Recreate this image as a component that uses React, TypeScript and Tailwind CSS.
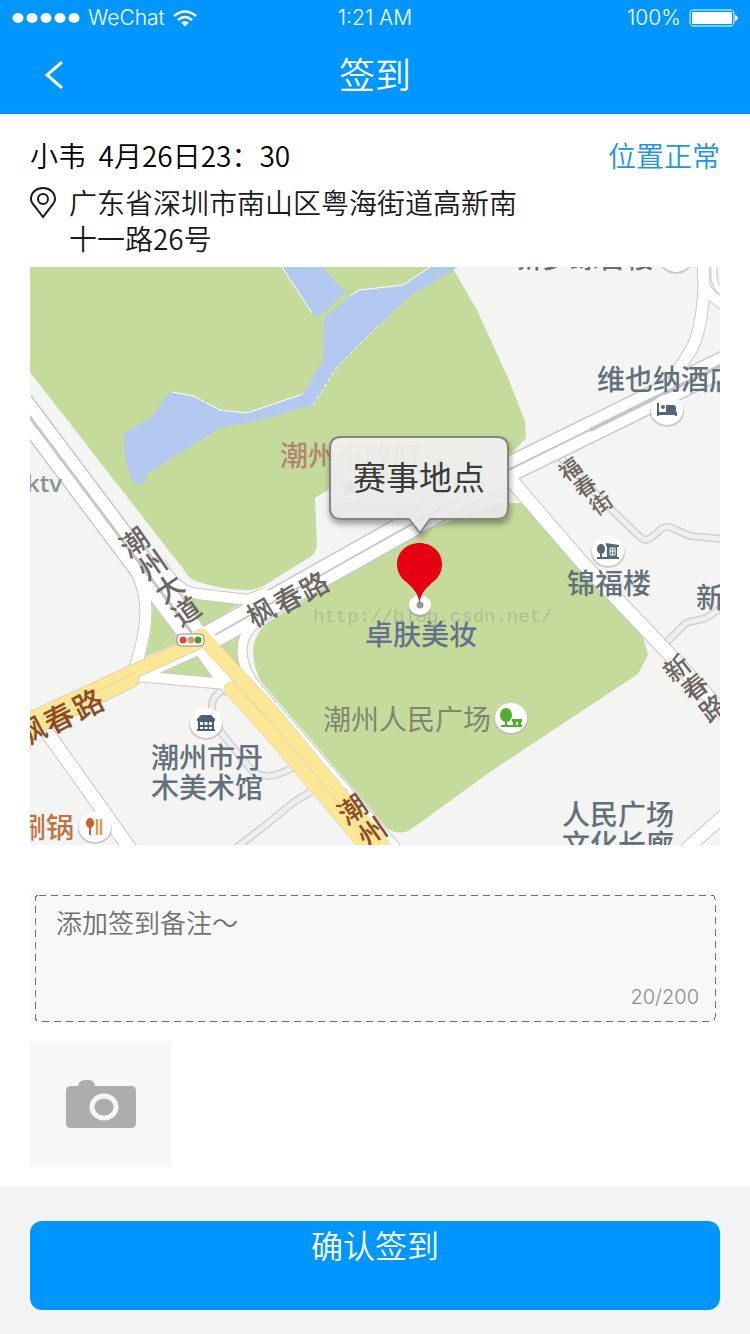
import React from "react";

type Glyph = { char: string; x: number; y: number };

function StreetLabel({ glyphs, angle, size, color }: { glyphs: Glyph[]; angle: number; size: number; color: string }) {
  return (
    <g fill={color} fontSize={size} textAnchor="middle" className="font-medium">
      {glyphs.map((g, i) => (
        <text key={i} x="0" y={size * 0.38} transform={`translate(${g.x} ${g.y}) rotate(${angle})`}>
          {g.char}
        </text>
      ))}
    </g>
  );
}

function PoiBadge({ x, y, children }: { x: number; y: number; children: React.ReactNode }) {
  return (
    <g transform={`translate(${x} ${y})`}>
      <ellipse cx="0" cy="2" rx="17" ry="15" fill="#b9b9b9" opacity="0.7" />
      <ellipse cx="0" cy="0" rx="16" ry="15" fill="#fff" />
      {children}
    </g>
  );
}

// each road is drawn twice: grey casing first, then its surface
const minorRoads = [
  "M558 455 L612 510 L641 538 Q646 542 652 537 L661 529 Q667 525 674 529 L690 536 L724 539",
  "M662 647 L684 625 Q688 621 694 621 L706 618 L724 606",
  "M226 689 Q211 695 212 708 Q213 722 223 735 L250 768 Q257 776 268 776 Q277 776 294 767",
  "M312 791 L294 802 L262 828 L236 848",
];

const roads = [
  { d: "M703 260 L704 287 Q702 330 691 350 L677 372", w: 11 },
  { d: "M714 260 L714 278 Q715 288 726 296", w: 5 },
  { d: "M704 284 Q706 294 726 306", w: 10 },
  { d: "M137 572 Q146 592 146 613 Q145 638 135 668", w: 11 },
  { d: "M160 562 Q176 592 198 594 L248 600 L268 592", w: 10 },
  { d: "M136 676 L226 684", w: 10 },
  { d: "M254 624 Q242 636 242 650 Q242 668 256 686 L398 850", w: 9 },
  { d: "M511 480 L580 560 L672 657 L726 716", w: 13 },
  { d: "M44 728 L131 850", w: 13 },
  { d: "M683 852 L728 812", w: 12 },
  { d: "M196 642 L232 692", w: 14 },
  { d: "M204 645 L136 676", w: 14 },
];

function VenueMap() {
  return (
    <svg
      viewBox="30 267 690 578"
      className="block w-full font-['Noto_Sans_CJK_SC',sans-serif]"
      role="img"
      aria-label="赛事地点地图"
    >
      <defs>
        <linearGradient id="bubble" x1="0" y1="0" x2="0" y2="1">
          <stop offset="0" stopColor="#f5f5f4" />
          <stop offset="1" stopColor="#e9e9e8" />
        </linearGradient>
        <filter id="bubbleShadow" x="-10%" y="-10%" width="120%" height="135%">
          <feDropShadow dx="1" dy="4" stdDeviation="3" floodColor="#000" floodOpacity="0.4" />
        </filter>
      </defs>

      <rect x="30" y="267" width="690" height="578" fill="#f4f4f2" />

      {/* parks */}
      <g fill="#c5db9c">
        <path d="M30 267 H452 L477 310 L508 378 L525 421 L526 438 L513 452 L440 470 L328 490 L315 498 L317 545 Q316 554 310 557 L270 582 Q258 590 248 590 Q220 590 193 580 Q187 576 184 570 L30 372 Z" />
        <path d="M500 503 H522 L643 637 L648 655 L638 674 L490 772 L410 830 Q398 836 387 828 L262 683 Q253 668 253 650 Q254 634 268 622 L370 561 L433 527 Z" />
        <path d="M152 600 L190 638 L145 657 Q154 628 152 600 Z" />
        <path d="M183 597 L243 602 L203 627 Z" />
        <path d="M212 642 L244 626 L240 680 Z" />
        <path d="M197 652 L146 676 L222 681 Z" />
      </g>

      {/* lake */}
      <g fill="#b3c9f0">
        <path d="M282 267 H322 L345 292 Q332 306 319 316 Q314 317 311 312 Z" />
        <path d="M173 392 L193 396 L220 410 L247 413 L303 394 L323 360 L324 318 L350 296 L360 290 L403 285 L432 267 H457 L452 271 L410 296 L377 327 L337 367 L313 405 L253 422 L222 427 L148 473 Q144 485 138 485 L132 480 Q121 455 125 433 L152 417 L168 393 Z" />
      </g>
      <g fill="none" stroke="#fff" strokeWidth="1">
        <path d="M172 392 L193 396 L220 410 L247 413 L303 394" />
        <path d="M350 296 L360 290 L403 285 L430 267" />
        <path d="M313 405 L337 367 L377 327" strokeDasharray="4 3" />
        <path d="M282 267 L312 313" />
      </g>

      {/* minor streets */}
      <g fill="none" strokeLinejoin="round">
        {minorRoads.map((d) => (
          <path key={d} d={d} stroke="#d0d0d2" strokeWidth="8" />
        ))}
        {minorRoads.map((d) => (
          <path key={d} d={d} stroke="#efefef" strokeWidth="5" />
        ))}
      </g>

      {/* main roads */}
      <g fill="none" stroke="#c8c8ca" strokeLinejoin="round">
        {roads.map((r) => (
          <path key={r.d} d={r.d} strokeWidth={r.w + 2} />
        ))}
        <path d="M20 404 L198 641" strokeWidth="29" />
        <path d="M205 640 L323 574 L508 470 L728 362" strokeWidth="27" />
      </g>
      <g fill="none" stroke="#fff" strokeLinejoin="round">
        {roads.map((r) => (
          <path key={r.d} d={r.d} strokeWidth={r.w} />
        ))}
        <path d="M20 404 L203 648" strokeWidth="26" />
        <path d="M198 644 L323 574 L508 470 L728 362" strokeWidth="24" />
      </g>
      <g fill="none" stroke="#c6c6c8" strokeWidth="2">
        <path d="M20 404 L192 633" strokeWidth="3" />
        <path d="M215 635 L323 574 L508 470 L728 362" />
        <path d="M590 430 L728 362" strokeWidth="4" />
      </g>

      {/* yellow avenues */}
      <g fill="none" stroke="#d6d0be" strokeLinecap="round">
        <path d="M196 643 L24 722" strokeWidth="15" />
        <path d="M132 680 L24 733" strokeWidth="15" />
        <path d="M201 636 L270 710 L386 850" strokeWidth="15" />
        <path d="M231 689 L270 732 L370 850" strokeWidth="15" />
      </g>
      <g fill="none" stroke="#fde797" strokeLinecap="round">
        <path d="M196 643 L24 722" strokeWidth="13" />
        <path d="M132 680 L24 733" strokeWidth="13" />
        <path d="M201 636 L270 710 L386 850" strokeWidth="14" />
        <path d="M231 689 L270 732 L370 850" strokeWidth="14" />
      </g>
      <g fill="none" stroke="#e3d6a6" strokeWidth="1">
        <path d="M136 672 L30 725" />
        <path d="M232 682 L270 721 L378 850" />
      </g>

      {/* street names */}
      <StreetLabel
        angle={-35}
        size={28}
        color="#6b6661"
        glyphs={[
          { char: "潮", x: 134, y: 542 },
          { char: "州", x: 152, y: 565 },
          { char: "大", x: 169, y: 588 },
          { char: "道", x: 186, y: 611 },
        ]}
      />
      <StreetLabel
        angle={-30}
        size={28}
        color="#6b6661"
        glyphs={[
          { char: "枫", x: 261, y: 612 },
          { char: "春", x: 288, y: 599 },
          { char: "路", x: 314, y: 586 },
        ]}
      />
      <StreetLabel
        angle={-27}
        size={30}
        color="#8c4b25"
        glyphs={[
          { char: "枫", x: 31, y: 731 },
          { char: "春", x: 59, y: 718 },
          { char: "路", x: 88, y: 704 },
        ]}
      />
      <StreetLabel
        angle={-35}
        size={28}
        color="#8c4b25"
        glyphs={[
          { char: "潮", x: 352, y: 809 },
          { char: "州", x: 372, y: 832 },
        ]}
      />
      <StreetLabel
        angle={-35}
        size={22}
        color="#6b6661"
        glyphs={[
          { char: "福", x: 570, y: 469 },
          { char: "春", x: 585, y: 486 },
          { char: "街", x: 601, y: 503 },
        ]}
      />
      <StreetLabel
        angle={-38}
        size={26}
        color="#6b6661"
        glyphs={[
          { char: "新", x: 677, y: 668 },
          { char: "春", x: 695, y: 687 },
          { char: "路", x: 713, y: 708 },
        ]}
      />

      {/* place names */}
      <g fontSize="28" fill="#62707c" className="font-medium">
        <text x="514" y="268">新梦综合楼</text>
        <text x="597" y="390">维也纳酒店</text>
        <text x="567" y="594">锦福楼</text>
        <text x="696" y="608">新</text>
        <text x="151" y="768">潮州市丹</text>
        <text x="151" y="798">木美术馆</text>
        <text x="562" y="825">人民广场</text>
        <text x="562" y="855">文化长廊</text>
        <text x="26" y="492" fontSize="24" fill="#8a9299" className="font-['Open_Sans',sans-serif] font-semibold">ktv</text>
      </g>
      <text x="280" y="466" fontSize="28" fill="#b0866f" className="font-medium">潮州市政府</text>
      <text x="365" y="645" fontSize="28" fill="#666f8c" className="font-medium">卓肤美妆</text>
      <text x="323" y="730" fontSize="28" fill="#7d876e">潮州人民广场</text>
      <text x="18" y="838" fontSize="28" fill="#bd7343" className="font-medium">涮锅</text>
      <text x="313" y="622" fontSize="19" fill="#aebf92" className="font-['Liberation_Mono',monospace]">http://blog.csdn.net/</text>

      {/* points of interest */}
      <PoiBadge x={676} y={257}>{null}</PoiBadge>
      <PoiBadge x={350} y={488}>
        <path d="M0 -9 L2.5 -3 L9 -3 L4 1 L6 8 L0 4 L-6 8 L-4 1 L-9 -3 L-2.5 -3 Z" fill="#a07c68" />
      </PoiBadge>
      <PoiBadge x={667} y={410}>
        <path d="M-10 -7 H-8 V2 H-1 V-5 H6 Q9 -5 9 -2 V2 H10 V6 H8 V5 H-8 V6 H-10 Z" fill="#556675" />
        <circle cx="-4" cy="-3" r="2" fill="#556675" />
      </PoiBadge>
      <PoiBadge x={608} y={551}>
        <g fill="#556675">
          <ellipse cx="-7" cy="-2" rx="4" ry="5" />
          <path d="M-8 2 H-6 V6 H11 V8 H-11 V6 H-8 Z" />
          <path d="M-2 -8 L11 -6 V-4 H9 V7 H-1 V-5 H-2 Z" />
        </g>
        <path d="M2 -3 H7 V4 H2 Z M4.5 -3 V4 M2 0 H7" fill="none" stroke="#fff" />
      </PoiBadge>
      <PoiBadge x={206} y={723}>
        <path d="M-9 -4 L-5 -8 H5 L9 -4 V-2 H-9 Z M-8 -2 H8 V6 H9 V8 H-9 V6 H-8 Z" fill="#4f6070" />
        <path d="M-6 -1 H-3 V2 H-6 Z M-1.5 -1 H1.5 V2 H-1.5 Z M3 -1 H6 V2 H3 Z M-6 4 H-3 V6 H-6 Z M-1.5 4 H1.5 V6 H-1.5 Z M3 4 H6 V6 H3 Z" fill="#fff" />
      </PoiBadge>
      <PoiBadge x={511} y={718}>
        <g fill="#4fae32">
          <ellipse cx="-5" cy="-3" rx="6" ry="7" />
          <path d="M-6 2 H-4 V7 H11 V9 H-10 V7 H-6 Z" />
          <path d="M1 1 H11 V4 H10 V7 H7 V4 H5 V7 H2 V4 H1 Z" />
        </g>
      </PoiBadge>
      <PoiBadge x={95} y={827}>
        <g fill="#cf5f28">
          <ellipse cx="-5" cy="-4" rx="4" ry="5" />
          <path d="M-6 0 H-4 V8 H-6 Z" />
        </g>
        <path d="M2 -8 V8 M6 -8 V8" stroke="#d99a55" strokeWidth="2.5" />
      </PoiBadge>

      {/* traffic lights */}
      <rect x="177" y="634" width="27" height="12" rx="4" fill="#fff" stroke="#8a8a80" />
      <circle cx="183" cy="640" r="3.5" fill="#e04848" />
      <circle cx="191" cy="640" r="3.5" fill="#d69a78" />
      <circle cx="198" cy="640" r="3.5" fill="#4a9a2c" />

      {/* venue pin */}
      <ellipse cx="420" cy="608" rx="11" ry="9" fill="#a5ab98" />
      <ellipse cx="420" cy="605" rx="11" ry="10" fill="#fff" />
      <circle cx="420" cy="605" r="3.5" fill="#9a9a9a" />
      <path d="M419.5 603 C418 592 412 587 405 581 C400 577 397 571 397 564 C397 552 407 543 419.5 543 C432 543 442 552 442 564 C442 571 439 577 434 581 C427 587 421 592 419.5 603 Z" fill="#e60012" />

      {/* venue bubble */}
      <path
        d="M341 437 H497 Q508 437 508 448 V508 Q508 519 497 519 H430 L420 533 L409 519 H341 Q330 519 330 508 V448 Q330 437 341 437 Z"
        fill="url(#bubble)"
        fillOpacity="0.9"
        stroke="#85857f"
        strokeWidth="2"
        filter="url(#bubbleShadow)"
      />
      <text x="419" y="490" fontSize="33" textAnchor="middle" fill="#3a3a38">赛事地点</text>
    </svg>
  );
}

function StatusBar() {
  return (
    <div className="grid h-9 grid-cols-3 items-center px-3 font-['Inter',sans-serif] text-[21px]">
      <div className="flex items-center gap-2">
        <svg width="68" height="10" viewBox="0 0 68 10" fill="currentColor" aria-hidden="true">
          {[6, 20, 34, 48, 62].map((cx) => (
            <ellipse key={cx} cx={cx} cy="5" rx="5.5" ry="5" />
          ))}
        </svg>
        <span className="font-light">WeChat</span>
        <svg width="24" height="17" viewBox="0 0 24 17" aria-hidden="true">
          <path d="M1 6 Q12 -3 23 6 M5 10 Q12 4 19 10" fill="none" stroke="currentColor" strokeWidth="2.5" />
          <path d="M8 12.5 Q12 9.5 16 12.5 L12 16.5 Z" fill="currentColor" />
        </svg>
      </div>
      <span className="text-center font-light">1:21 AM</span>
      <div className="flex items-center justify-end gap-2">
        <span className="font-light">100%</span>
        <svg width="49" height="18" viewBox="0 0 49 18" aria-hidden="true">
          <rect x="1" y="1" width="44" height="16" rx="3" fill="none" stroke="currentColor" />
          <rect x="3" y="3" width="40" height="12" rx="1" fill="currentColor" />
          <path d="M46 6 Q49 7 49 9 Q49 11 46 12 Z" fill="currentColor" />
        </svg>
      </div>
    </div>
  );
}

function App() {
  return (
    <div className="flex min-h-screen flex-col bg-white font-['Noto_Sans_CJK_SC',sans-serif]">
      <header className="bg-[#0096ff] text-white">
        <StatusBar />
        <div className="grid h-[78px] grid-cols-[1fr_auto_1fr] items-center px-11">
          <button type="button" aria-label="返回" className="justify-self-start">
            <svg width="20" height="28" viewBox="0 0 20 28" fill="none" stroke="currentColor" strokeWidth="3">
              <path d="M18 1 L3 14 L18 27" />
            </svg>
          </button>
          <h1 className="pb-1 text-4xl font-[350]">签到</h1>
        </div>
      </header>

      <main className="flex grow flex-col px-[30px] pt-5 pb-5">
        <div className="flex items-center justify-between text-[28px] leading-[42px] font-[350]">
          <p className="whitespace-pre text-black">小韦{"  "}4月26日23：30</p>
          <p className="text-[#1c94ea]">位置正常</p>
        </div>

        <div className="mt-2 flex gap-[13px]">
          <svg width="26" height="32" viewBox="0 0 26 32" fill="none" stroke="#1a1a1a" strokeWidth="2" className="mt-[3px] shrink-0" aria-hidden="true">
            <path d="M13 30 L4.5 19 Q1 15 1 12 C1 5.5 6.5 1 13 1 C19.5 1 25 5.5 25 12 Q25 15 21.5 19 Z" />
            <circle cx="13" cy="12" r="5" />
          </svg>
          <p className="max-w-[460px] text-[28px] leading-9 font-[350] text-[#1a1a1a]">广东省深圳市南山区粤海街道高新南十一路26号</p>
        </div>

        <div className="mt-[11px]">
          <VenueMap />
        </div>

        <div className="relative mt-12 bg-[#f8f8f8] px-[26px] pt-2 pb-3">
          {/* long-dash outline, spacing that border-dashed cannot give */}
          <svg className="pointer-events-none absolute top-[2px] left-[5px] h-[126px] w-[calc(100%-10px)] overflow-visible" aria-hidden="true">
            <rect width="100%" height="100%" rx="4" fill="none" stroke="#6e6e6e" strokeDasharray="7 5" shapeRendering="crispEdges" />
          </svg>
          <textarea
            aria-label="签到备注"
            placeholder="添加签到备注～"
            className="block h-[82px] w-full resize-none bg-transparent text-[26px] leading-[42px] font-[350] outline-none placeholder:text-[#707070]"
          />
          <p className="-mr-[5px] text-right font-['Inter',sans-serif] text-xl leading-7 font-light text-[#8c8c8c]">20/200</p>
        </div>

        <button type="button" aria-label="拍照" className="mt-[18px] flex h-[126px] w-[141px] items-center justify-center bg-[#f7f7f7]">
          <svg width="70" height="49" viewBox="0 0 70 49">
            <path d="M5 6 H12 Q13 0 19 0 H23 Q28 0 29 6 H65 Q70 6 70 11 V43 Q70 48 65 48 H5 Q0 48 0 43 V11 Q0 6 5 6 Z" fill="#adadad" />
            <ellipse cx="38" cy="27" rx="12" ry="11" fill="none" stroke="#f7f7f7" strokeWidth="5" />
          </svg>
        </button>
      </main>

      <footer className="bg-[#f4f4f4] px-[30px] pt-[34px] pb-6">
        <button type="button" className="block w-full rounded-xl bg-[#0096ff] pb-[43px] text-[32px] leading-[46px] font-[350] text-white">
          确认签到
        </button>
      </footer>
    </div>
  );
}

export default App;
